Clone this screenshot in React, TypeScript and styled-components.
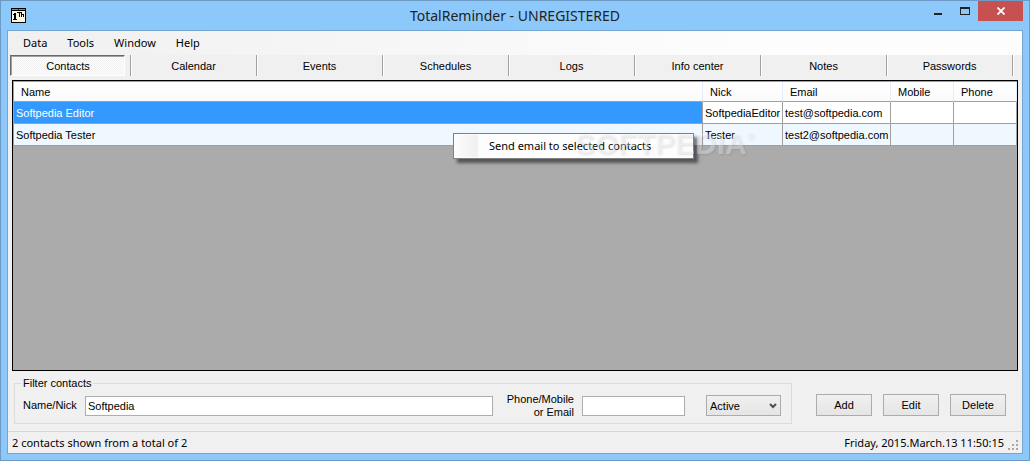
import React, { useState } from "react";
import styled, { createGlobalStyle } from "styled-components";

const uiFont = `"Liberation Sans", Arial, sans-serif`;
const shellFont = `"Noto Sans", "Open Sans", sans-serif`;

const GlobalStyle = createGlobalStyle`
  *, *::before, *::after { box-sizing: border-box; }
  body { margin: 0; color: #000; font: 11px/16px ${uiFont}; }
  button, input, select { font: inherit; color: inherit; }
`;

const Frame = styled.div`
  display: flex;
  flex-direction: column;
  min-height: 100vh;
  padding: 0 6px 6px;
  background: #8dc8fa;
  border: 1px solid #6c9ac4;
`;

const TitleBar = styled.header`
  position: relative;
  display: flex;
  align-items: center;
  justify-content: center;
  height: 29px;
`;

const Title = styled.h1`
  margin: 0;
  color: #222;
  font: 14px/20px ${shellFont};
`;

const AppIcon = styled.svg`
  position: absolute;
  left: 4px;
  top: 7px;
`;

const Controls = styled.div`
  position: absolute;
  top: 0;
  right: 0;
  display: flex;
`;

const ControlButton = styled.button<{ $danger?: boolean }>`
  display: flex;
  width: ${(p) => (p.$danger ? 45 : 27)}px;
  height: 20px;
  padding: 0;
  border: 0;
  background: ${(p) => (p.$danger ? "#c75050" : "transparent")};
  align-items: center;
  justify-content: center;
`;

const Client = styled.main`
  display: flex;
  flex: 1;
  flex-direction: column;
  background: #f0f0f0;
  border: 1px solid #74a6d3;
`;

const MenuBar = styled.nav`
  display: flex;
  height: 24px;
  padding-left: 8px;
  background: linear-gradient(90deg, #f0f0f0, #fdfdfd 75%);
`;

const MenuItem = styled.button`
  padding: 0 7px;
  margin-right: 6px;
  border: 0;
  background: none;
  font: 11px/24px ${shellFont};
`;

const Tabs = styled.div`
  display: flex;
  height: 21px;
  margin: 0 9px 0 2px;
`;

const TabCell = styled.div<{ $first: boolean }>`
  display: flex;
  flex: ${(p) => (p.$first ? 121 : 126)} 1 0;
  min-width: 0;
  border-right: 1px solid #a0a0a0;
  box-shadow: 1px 0 #fff;
`;

const Tab = styled.button<{ $pressed: boolean }>`
  flex: 1;
  padding: ${(p) => (p.$pressed ? "1px 0 0 1px" : "0")};
  margin-right: ${(p) => (p.$pressed ? 5 : 0)}px;
  border: ${(p) => (p.$pressed ? "1px solid" : "0")};
  border-color: #696969 #fff #fff #696969;
  background: ${(p) =>
    p.$pressed ? "repeating-conic-gradient(#f0f0f0 0 25%, #fff 0 50%) 0 0 / 2px 2px" : "none"};
  box-shadow: ${(p) => (p.$pressed ? "inset 1px 1px #a0a0a0" : "none")};
  line-height: 18px;
`;

const Grid = styled.section`
  position: relative;
  flex: 1;
  margin: 4px 4px 0;
  background: #ababab;
  border: 1px solid #000;
`;

const Table = styled.table`
  width: 100%;
  table-layout: fixed;
  border-collapse: separate;
  border-spacing: 0;
  border: solid #a0a0a0;
  border-width: 1px 0 0 1px;
`;

const Col = styled.col<{ $width?: number }>`
  width: ${(p) => (p.$width ? `${p.$width}px` : "auto")};
`;

const HeadCell = styled.th`
  height: 20px;
  padding: 0 7px;
  background: linear-gradient(#fff, #fafafb);
  border-right: 1px solid #e4ecf7;
  border-bottom: 1px solid #a0a0a0;
  font-weight: normal;
  text-align: left;
`;

const Row = styled.tr<{ $alt: boolean }>`
  background: ${(p) => (p.$alt ? "#f0f8ff" : "#fff")};
`;

const Cell = styled.td<{ $selected?: boolean }>`
  height: 22px;
  padding: 0 0 0 2px;
  border-right: 1px solid #a0a0a0;
  border-bottom: 1px solid #a0a0a0;
  background: ${(p) => (p.$selected ? "#3399ff" : "transparent")};
  color: ${(p) => (p.$selected ? "#fff" : "#000")};
  white-space: nowrap;
`;

const ContextMenu = styled.div`
  position: absolute;
  left: 440px;
  top: 52px;
  width: 241px;
  height: 26px;
  padding: 1px;
  background: #fdfdfd;
  border: 1px solid #808080;
  box-shadow: 4px 4px 3px rgba(0, 0, 0, 0.5);
`;

const ContextItem = styled.button`
  width: 100%;
  height: 22px;
  padding: 0 0 0 34px;
  border: 0;
  background: linear-gradient(90deg, #fcfcfc, #f0f0f0) no-repeat 0 0 / 23px 100%;
  font: 11px/22px ${shellFont};
  text-align: left;
`;

const Watermark = styled.div`
  position: absolute;
  left: 562px;
  top: 46px;
  color: rgba(255, 255, 255, 0.35);
  font: bold 30px/34px ${uiFont};
  text-shadow: 1px 1px 2px rgba(0, 0, 0, 0.1);
  pointer-events: none;

  sup { font-size: 10px; line-height: 10px; vertical-align: 14px; }
`;

const Controlbar = styled.div`
  display: flex;
  align-items: flex-start;
  padding: 5px 16px 7px 6px;
`;

const Filter = styled.fieldset`
  display: flex;
  flex: 1;
  min-width: 0;
  height: 48px;
  margin: 0;
  padding: 0 10px 0 8px;
  border: 1px solid #dcdcdc;
`;

const Legend = styled.legend`
  padding: 0 2px;
  margin-left: -2px;
  line-height: 14px;
`;

const FilterRow = styled.div`
  display: flex;
  width: 100%;
  height: 31px;
  align-items: center;
`;

const Label = styled.label<{ $right?: boolean }>`
  flex: none;
  width: ${(p) => (p.$right ? 81 : 62)}px;
  margin-right: ${(p) => (p.$right ? 8 : 0)}px;
  text-align: ${(p) => (p.$right ? "right" : "left")};
  line-height: 13px;
`;

const TextInput = styled.input<{ $wide?: boolean }>`
  flex: ${(p) => (p.$wide ? "1" : "none")};
  width: 103px;
  min-width: 0;
  height: 20px;
  padding: 0 2px;
  border: 1px solid #abadb3;
  border-radius: 0;
  background: #fff;
`;

const SelectBox = styled.div`
  position: relative;
  flex: none;
  margin-left: 21px;

  svg { position: absolute; right: 4px; top: 8px; pointer-events: none; }
`;

const Select = styled.select`
  display: block;
  width: 75px;
  height: 21px;
  padding: 0 3px;
  appearance: none;
  border: 1px solid #acacac;
  border-radius: 0;
  background: linear-gradient(#f0f0f0, #e5e5e5);
`;

const Actions = styled.div`
  display: flex;
  gap: 11px;
  margin: 18px 0 0 24px;
`;

const ActionButton = styled.button`
  width: 56px;
  height: 22px;
  padding: 0;
  border: 1px solid #acacac;
  background: linear-gradient(#f0f0f0, #e5e5e5);
`;

const StatusBar = styled.footer`
  display: flex;
  justify-content: space-between;
  height: 22px;
  padding: 0 3px 0 4px;
  border-top: 1px solid #d7d7d7;
  font: 11px/22px ${shellFont};
`;

const Clock = styled.div`
  display: flex;
  gap: 4px;

  svg { margin-top: 8px; }
`;

const tabNames = ["Contacts", "Calendar", "Events", "Schedules", "Logs", "Info center", "Notes", "Passwords"];

const columns: { name: string; width?: number }[] = [
  { name: "Name" },
  { name: "Nick", width: 80 },
  { name: "Email", width: 108 },
  { name: "Mobile", width: 63 },
  { name: "Phone", width: 63 },
];

const contacts = [
  ["Softpedia Editor", "SoftpediaEditor", "test@softpedia.com", "", ""],
  ["Softpedia Tester", "Tester", "test2@softpedia.com", "", ""],
];

const gripDots = [[8, 0], [4, 4], [8, 4], [0, 8], [4, 8], [8, 8]];

export default function App() {
  const [tab, setTab] = useState("Contacts");
  const [selected, setSelected] = useState(0);

  return (
    <>
      <GlobalStyle />
      <Frame>
        <TitleBar>
          <AppIcon width="16" height="16" viewBox="0 0 16 16" shapeRendering="crispEdges" aria-hidden="true">
            <rect x=".5" y=".5" width="14" height="14" fill="#fff8e0" stroke="#000" />
            <path d="M1 1h13v1H1z" fill="#18aef0" />
            <path d="M7 1h1v1H7z" fill="#1b3f9b" />
            <path d="M1 2h13v1H1z" fill="#000" />
            <path d="M3 5h2v6h1v1H2v-1h1V7H2V6h1zM6 4h4v1H9v4H8V5H6zM10 4h1v2h2v3h-1V7h-1v2h-1z" fill="#000" />
          </AppIcon>
          <Title>TotalReminder - UNREGISTERED</Title>
          <Controls>
            <ControlButton aria-label="Minimize">
              <svg width="8" height="10"><path d="M0 7h8v2H0z" fill="#222" /></svg>
            </ControlButton>
            <ControlButton aria-label="Maximize">
              <svg width="10" height="8" shapeRendering="crispEdges">
                <path fillRule="evenodd" d="M0 0h10v8H0zM1 2v5h8V2z" fill="#222" />
              </svg>
            </ControlButton>
            <ControlButton $danger aria-label="Close">
              <svg width="8" height="8"><path d="M.5.5l7 7M7.5.5l-7 7" stroke="#fff" strokeWidth="1.8" /></svg>
            </ControlButton>
          </Controls>
        </TitleBar>
        <Client>
          <MenuBar>
            {["Data", "Tools", "Window", "Help"].map((m) => (
              <MenuItem key={m}>{m}</MenuItem>
            ))}
          </MenuBar>
          <Tabs role="tablist">
            {tabNames.map((name, i) => (
              <TabCell key={name} $first={i === 0}>
                <Tab role="tab" aria-selected={tab === name} $pressed={tab === name} onClick={() => setTab(name)}>
                  {name}
                </Tab>
              </TabCell>
            ))}
          </Tabs>
          <Grid>
            <Table>
              <colgroup>
                {columns.map((c) => (
                  <Col key={c.name} $width={c.width} />
                ))}
              </colgroup>
              <thead>
                <tr>
                  {columns.map((c) => (
                    <HeadCell key={c.name}>{c.name}</HeadCell>
                  ))}
                </tr>
              </thead>
              <tbody>
                {contacts.map((row, r) => (
                  <Row key={row[0]} $alt={r % 2 === 1} onClick={() => setSelected(r)}>
                    {row.map((value, c) => (
                      <Cell key={c} $selected={r === selected && c === 0}>
                        {value}
                      </Cell>
                    ))}
                  </Row>
                ))}
              </tbody>
            </Table>
            <ContextMenu role="menu">
              <ContextItem role="menuitem">Send email to selected contacts</ContextItem>
            </ContextMenu>
            <Watermark>
              SOFTPEDIA<sup>®</sup>
            </Watermark>
          </Grid>
          <Controlbar>
            <Filter>
              <Legend>Filter contacts</Legend>
              <FilterRow>
                <Label htmlFor="name">Name/Nick</Label>
                <TextInput $wide id="name" defaultValue="Softpedia" />
                <Label $right htmlFor="phone">
                  Phone/Mobile
                  <br />
                  or Email
                </Label>
                <TextInput id="phone" />
                <SelectBox>
                  <Select aria-label="Status" defaultValue="Active">
                    <option>Active</option>
                    <option>Inactive</option>
                  </Select>
                  <svg width="8" height="6">
                    <path d="M1 1l3 3 3-3" fill="none" stroke="#505050" strokeWidth="2" />
                  </svg>
                </SelectBox>
              </FilterRow>
            </Filter>
            <Actions>
              <ActionButton>Add</ActionButton>
              <ActionButton>Edit</ActionButton>
              <ActionButton>Delete</ActionButton>
            </Actions>
          </Controlbar>
          <StatusBar>
            <span>2 contacts shown from a total of 2</span>
            <Clock>
              <time>Friday, 2015.March.13 11:50:15</time>
              <svg width="11" height="11" shapeRendering="crispEdges" aria-hidden="true">
                {gripDots.map(([x, y]) => (
                  <rect key={`${x}-${y}`} x={x} y={y} width="2" height="2" fill="#a8a8a8" />
                ))}
              </svg>
            </Clock>
          </StatusBar>
        </Client>
      </Frame>
    </>
  );
}
